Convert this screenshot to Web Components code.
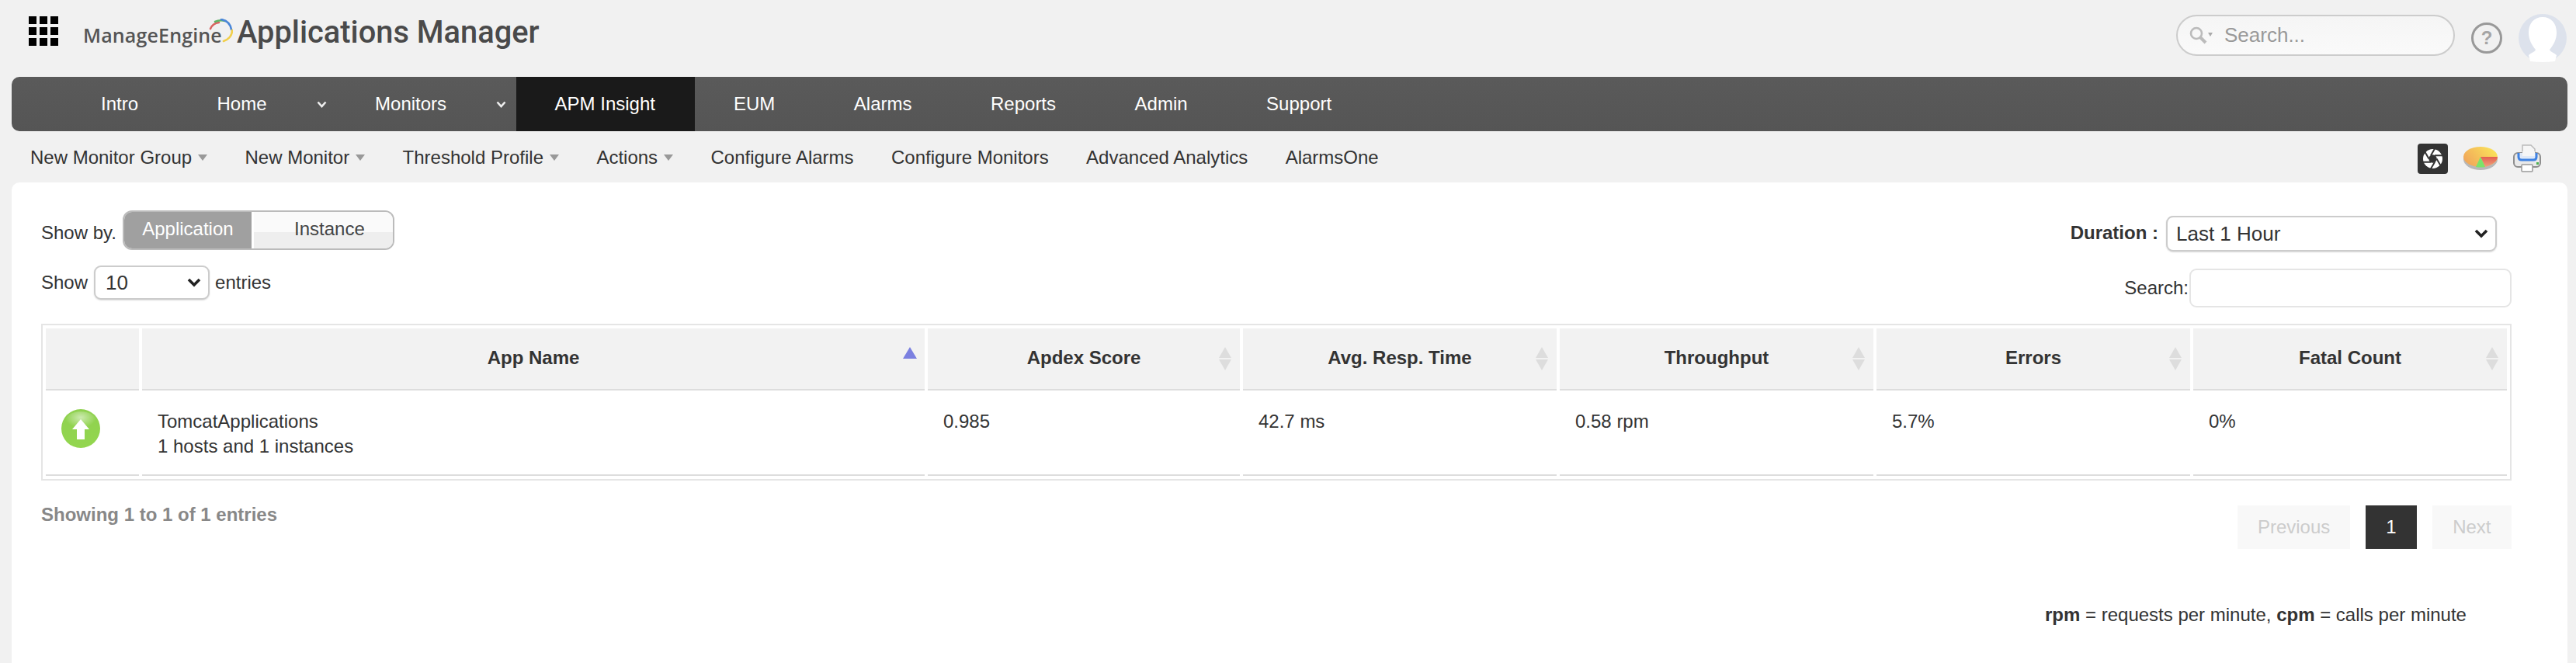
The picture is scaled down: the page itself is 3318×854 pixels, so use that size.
<!DOCTYPE html>
<html lang="en"><head><meta charset="utf-8"><title>Applications Manager</title>
<style>
html,body{margin:0;height:854px;overflow:hidden;background:#f1f1f1}
body{font:24px "Liberation Sans",Arial,sans-serif;color:#333}
.x{margin-top:15px;line-height:28px}
</style></head><body>
<app-header></app-header>
<main-nav></main-nav>
<sub-nav></sub-nav>
<content-card>
  <toolbar-row slot="a">
    <span slot="start" class="x">Show by.</span>
    <view-toggle slot="start"></view-toggle>
    <duration-select slot="end"></duration-select>
  </toolbar-row>
  <toolbar-row slot="b">
    <entries-select slot="start"></entries-select>
    <table-search slot="end"></table-search>
  </toolbar-row>
  <apdex-table slot="table"></apdex-table>
  <table-footer slot="footer"></table-footer>
  <legend-note slot="note"></legend-note>
</content-card>
<script>
const def=(name,html)=>customElements.define(name,class extends HTMLElement{
  constructor(){super();this.attachShadow({mode:'open'}).innerHTML=html;}
});
const CHEV="url(\"data:image/svg+xml,%3Csvg xmlns='http://www.w3.org/2000/svg' width='20' height='14'%3E%3Cpath d='M3 3l7 7 7-7' fill='none' stroke='%23222' stroke-width='3.6'/%3E%3C/svg%3E\")";

def('app-header',`<style>
:host{display:flex;align-items:flex-start;height:99px;box-sizing:border-box;padding-left:37px;color:#555}
.grid{display:grid;grid-template-columns:repeat(3,10px);grid-auto-rows:10px;gap:4px;margin-top:21px}
.grid i{background:#000}
.logo{position:relative;margin:18px 0 0 32px;display:flex;align-items:baseline;white-space:nowrap;height:40px}
.me{font:600 25px "Open Sans",sans-serif;letter-spacing:.15px;color:#555;width:198px}
.am{font:500 39.800px Roboto,sans-serif;color:#4a4a4a}
.arcs{position:absolute;left:161px;top:6px;width:32px;height:32px}
.right{margin-left:auto;display:flex;align-items:flex-start}
.search{box-sizing:border-box;width:359px;height:53px;margin-top:19px;border:2px solid #ccc;border-radius:27px;background:linear-gradient(#f5f5f5,#fafafa);display:flex;align-items:center;padding-left:15px;color:#999;font-size:26px}
.search svg{width:30px;height:24px;margin-right:15px}
.help{margin:29px 21px 0 21px;width:40px;height:40px}
.ava{width:62px;height:62px;margin:18px 12px 0 0}
</style>
<div class="grid"><i></i><i></i><i></i><i></i><i></i><i></i><i></i><i></i><i></i></div>
<div class="logo"><span class="me">ManageEngine</span><span class="am">Applications Manager</span>
<svg class="arcs" viewBox="0 0 32 32" fill="none" stroke-width="2.600" stroke-linecap="round">
<path d="M3 13Q6 6 14 5" stroke="#d9635f"/><path d="M9 4Q15 1 22 3" stroke="#5fb365"/><path d="M17 1Q28 3 30 14" stroke="#4a86d8"/><path d="M31 15Q31 25 20 29" stroke="#f1cf4b"/></svg></div>
<div class="right">
<div class="search"><svg viewBox="0 0 30 24" fill="none" stroke="#bbb"><circle cx="9" cy="9" r="7" stroke-width="2.600"/><path d="M14 14l7 7" stroke-width="4"/><path d="M24 8h6l-3 5z" fill="#aaa" stroke="none"/></svg><span>Search...</span></div>
<svg class="help" viewBox="0 0 40 40"><circle cx="20" cy="20" r="18.500" fill="none" stroke="#999" stroke-width="3"/><text x="20" y="28" font-family="Liberation Sans" font-size="24" font-weight="700" text-anchor="middle" fill="#a5a5a5">?</text></svg>
<svg class="ava" viewBox="0 0 62 62"><circle cx="31" cy="31" r="31" fill="#dde2ec"/><path d="M31 4C42 4 49 12 49 24C49 33 45 40 40 46C41 49 46 50 49 53L47 61Q31 63 15 61L13 53C16 50 21 49 22 46C17 40 13 33 13 24C13 12 20 4 31 4z" fill="#fff"/></svg>
</div>`);

def('nav-item',`<style>
:host{display:flex;align-items:center;height:100%;padding:0 50px;margin-right:1.500px;color:#fff;white-space:nowrap;position:relative}
:host([active]){background:#1a1a1a;margin-right:0;padding-right:51px}
:host([menu]){margin-right:39.500px}
svg{position:absolute;right:-27px;top:31px;width:13px;height:9px;display:none}
:host([menu]) svg{display:block}
</style><slot></slot><svg viewBox="0 0 13 9"><path d="M1.500 1.500L6.500 7l5-5.500" fill="none" stroke="#eee" stroke-width="2.600"/></svg>`);

def('main-nav',`<style>
:host{display:flex;height:70px;margin:0 11px 0 15px;padding-left:65px;background:linear-gradient(#5a5a5a,#555);border-radius:10px;box-sizing:border-box}
</style>
<nav-item>Intro</nav-item><nav-item menu>Home</nav-item><nav-item menu>Monitors</nav-item><nav-item active>APM Insight</nav-item><nav-item>EUM</nav-item><nav-item>Alarms</nav-item><nav-item>Reports</nav-item><nav-item>Admin</nav-item><nav-item>Support</nav-item>`);

def('sub-item',`<style>
:host{display:flex;align-items:center;gap:8px;white-space:nowrap}
i{display:none;width:0;height:0;border:6.500px solid transparent;border-top:8px solid #999;border-bottom:0}
:host([menu]) i{display:block}
</style><slot></slot><i></i>`);

const blades=[0,60,120,180,240,300].map(a=>`<path transform="rotate(${a} 19.500 19.500)" d="M24.500 19.500L31 30.800"/>`).join('');
def('sub-nav',`<style>
:host{display:flex;align-items:center;height:66px;padding:2px 45px 0 39px;gap:48.400px;box-sizing:border-box;color:#333}
.icons{margin-left:auto;display:flex;align-items:center;gap:20px;padding-top:2px}
svg{display:block}
</style>
<sub-item menu>New Monitor Group</sub-item><sub-item menu>New Monitor</sub-item><sub-item menu>Threshold Profile</sub-item><sub-item menu>Actions</sub-item><sub-item>Configure Alarms</sub-item><sub-item>Configure Monitors</sub-item><sub-item>Advanced Analytics</sub-item><sub-item>AlarmsOne</sub-item>
<div class="icons">
<svg width="39" height="39" viewBox="0 0 39 39"><rect width="39" height="39" rx="4" fill="#333"/><circle cx="19.500" cy="19.500" r="12.500" fill="#fff"/><g stroke="#333" stroke-width="2" fill="none">${blades}</g><circle cx="19.500" cy="19.500" r="5.200" fill="#333"/></svg>
<svg width="44" height="30" viewBox="0 0 44 30"><defs><linearGradient id="p" x1="0" x2="1" y1=".6" y2=".1"><stop offset="0" stop-color="#f1a85a"/><stop offset="1" stop-color="#fbe85a"/></linearGradient><linearGradient id="r" x1="0" x2="0" y1="0" y2="1"><stop offset="0" stop-color="#e4604f"/><stop offset="1" stop-color="#efa27e"/></linearGradient></defs><ellipse cx="22" cy="16" rx="22" ry="14" fill="#b8b8b8"/><ellipse cx="22" cy="13" rx="22" ry="13" fill="url(#p)"/><path d="M22 13H44C44 19 36 24 28 26z" fill="url(#r)"/><path d="M22 13L16 26Q22 27 28 26z" fill="#7be36b"/></svg>
<svg width="36" height="36" viewBox="0 0 36 36"><path d="M12 1H23L28 6V16H12z" fill="#f6f6f6" stroke="#bbb" stroke-width="1.500"/><rect x="1" y="11" width="34" height="18" rx="5" fill="#e9e9e9" stroke="#8f8f8f" stroke-width="2"/><path d="M7 11v5q0 4 4 4h15q4 0 4-4v-5" fill="#dfe9f8" stroke="#3f82e2" stroke-width="3"/><path d="M12 9H28V15H12z" fill="#f6f6f6"/><rect x="11" y="26" width="14" height="9" rx="1" fill="#fff" stroke="#999" stroke-width="1.500"/><rect x="30" y="23" width="3" height="3" fill="#4caf50"/></svg>
</div>`);

def('content-card',`<style>
:host{display:block;box-sizing:border-box;height:619px;margin:0 11px 0 15px;background:#fff;border-radius:10px 10px 0 0;padding:36px 72px 0 38px}
.t{display:block;margin-top:21px}
.f{display:block;margin-top:32px}
.n{display:block;margin-top:71px}
</style>
<slot name="a"></slot><slot name="b"></slot>
<div class="t"><slot name="table"></slot></div>
<div class="f"><slot name="footer"></slot></div>
<div class="n"><slot name="note"></slot></div>`);

def('toolbar-row',`<style>
:host{display:flex;justify-content:space-between;align-items:flex-start}
:host([slot=a]){height:71px}
.s,.e{display:flex;align-items:flex-start}
</style><div class="s"><slot name="start"></slot></div><div class="e"><slot name="end"></slot></div>`);

def('view-toggle',`<style>
:host{display:flex;box-sizing:border-box;width:350px;height:51px;margin-left:8px;border:2px solid #bbb;border-radius:12px;overflow:hidden;background:#fff}
div{display:flex;align-items:center;justify-content:center;padding-bottom:3px;box-sizing:border-box}
.on{width:164px;background:#a0a0a0;color:#fff;margin-right:3px}
.off{flex:1;padding-left:16px;background:linear-gradient(#fafafa 55%,#eee 55%);color:#444}
</style><div class="on">Application</div><div class="off">Instance</div>`);

const selCss=`select{appearance:none;-webkit-appearance:none;box-sizing:border-box;background:#fff ${CHEV} no-repeat right 8px center;border:2px solid #ccc;border-radius:9px;font:26px "Liberation Sans",sans-serif;color:#333;box-shadow:0 1px 2px #ddd;margin:0;outline:0}`;
def('duration-select',`<style>:host{display:flex;align-items:flex-start;margin-right:19px;font-weight:700}
span{margin:15px 10px 0 0;line-height:28px}
${selCss}
select{width:426px;height:46px;padding-left:11px;margin-top:7px}
</style><span>Duration :</span><select><option>Last 1 Hour</option></select>`);
def('entries-select',`<style>:host{display:flex;align-items:center;height:44px}
${selCss}
select{width:149px;height:44px;padding-left:13px;margin:0 7px 0 8px}
</style><span>Show</span><select><option>10</option></select><span>entries</span>`);
def('table-search',`<style>:host{display:flex;align-items:center;margin-top:4px}
input{box-sizing:border-box;width:415px;height:50px;border:2px solid #e5e5e5;border-radius:9px;margin:0 0 0 1px;background:#fff;outline:0}
</style><span>Search:</span><input aria-label="Search">`);

def('sort-mark',`<style>
:host{position:absolute;right:11px;top:24px;width:16px;height:30px;display:flex;flex-direction:column;justify-content:space-between}
i{width:0;height:0;border-left:8px solid transparent;border-right:8px solid transparent}
.u{border-bottom:14px solid #ddd}.d{border-top:14px solid #ddd}
:host([asc]){right:10px;width:18px}
:host([asc]) .u{border-left-width:9px;border-right-width:9px;border-bottom:15px solid #7b80e0}
:host([asc]) .d{display:none}
</style><i class="u"></i><i class="d"></i>`);

def('apdex-table',`<style>
:host{display:block;border:2px solid #e5e5e5;padding:4px}
.g{display:grid;grid-template-columns:120px 1008px 402px repeat(4,404px);column-gap:4px;grid-template-rows:80px 110px}
.h{position:relative;background:#f2f2f2;border-bottom:2px solid #ddd;display:flex;align-items:center;justify-content:center;font-weight:700;box-sizing:border-box;padding-bottom:2px}
.c{border-bottom:2px solid #ddd;box-sizing:border-box;padding:24px 20px 0;line-height:32px}
.i{padding:24px 0 0 20px}
svg{display:block}
</style><div class="g">
<div class="h"></div>
<div class="h">App Name<sort-mark asc></sort-mark></div>
<div class="h">Apdex Score<sort-mark></sort-mark></div>
<div class="h">Avg. Resp. Time<sort-mark></sort-mark></div>
<div class="h">Throughput<sort-mark></sort-mark></div>
<div class="h">Errors<sort-mark></sort-mark></div>
<div class="h">Fatal Count<sort-mark></sort-mark></div>
<div class="c i"><svg width="50" height="50" viewBox="0 0 50 50"><defs><linearGradient id="g" x1="0" x2="0" y1="0" y2="1"><stop offset="0" stop-color="#8fd14f"/><stop offset="1" stop-color="#93d64f"/></linearGradient><radialGradient id="s" cx=".5" cy=".3" r=".5"><stop offset="0" stop-color="#fff" stop-opacity=".55"/><stop offset="1" stop-color="#fff" stop-opacity="0"/></radialGradient></defs><circle cx="25" cy="25" r="25" fill="url(#g)"/><ellipse cx="25" cy="16" rx="20" ry="13" fill="url(#s)"/><path d="M25 13L36 26H30V39H20V26H14z" fill="#fff"/></svg></div>
<div class="c">TomcatApplications<br>1 hosts and 1 instances</div>
<div class="c">0.985</div><div class="c">42.7 ms</div><div class="c">0.58 rpm</div><div class="c">5.7%</div><div class="c">0%</div>
</div>`);

def('page-btn',`<style>
:host{display:flex;align-items:center;height:56px;padding:0 26px;background:#f8f8f8;color:#ccc}
:host([on]){background:#333;color:#fff}
</style><slot></slot>`);
def('table-footer',`<style>
:host{display:flex;justify-content:space-between;align-items:flex-start}
b{color:#888;line-height:28px;margin-top:-2px}
div{display:flex;gap:20px}
</style><b>Showing 1 to 1 of 1 entries</b><div><page-btn>Previous</page-btn><page-btn on>1</page-btn><page-btn style="padding:0 26.500px">Next</page-btn></div>`);
def('legend-note',`<style>:host{display:block;padding-left:2581px;white-space:nowrap;line-height:28px}</style><b>rpm</b> = requests per minute, <b>cpm</b> = calls per minute`);
</script>
</body></html>
